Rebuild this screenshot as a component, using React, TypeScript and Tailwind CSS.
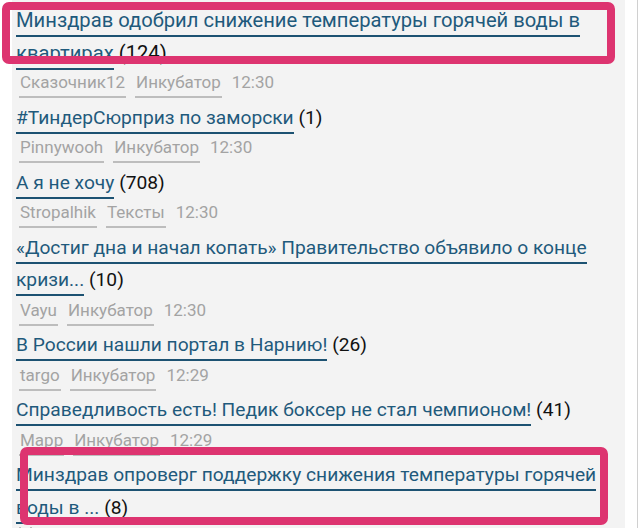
import React from 'react';

type Post = {
    title: string;
    count: number;
    author: string;
    section: string;
    time: string;
    big?: boolean;
};

const posts: Post[] = [
    { title: 'Минздрав одобрил снижение температуры горячей воды в квартирах', count: 124, author: 'Сказочник12', section: 'Инкубатор', time: '12:30', big: true },
    { title: '#ТиндерСюрприз по заморски', count: 1, author: 'Pinnywooh', section: 'Инкубатор', time: '12:30' },
    { title: 'А я не хочу', count: 708, author: 'Stropalhik', section: 'Тексты', time: '12:30' },
    { title: '«Достиг дна и начал копать» Правительство объявило о конце кризи...', count: 10, author: 'Vayu', section: 'Инкубатор', time: '12:30' },
    { title: 'В России нашли портал в Нарнию!', count: 26, author: 'targo', section: 'Инкубатор', time: '12:29' },
    { title: 'Справедливость есть! Педик боксер не стал чемпионом!', count: 41, author: 'Mapp', section: 'Инкубатор', time: '12:29' },
    { title: 'Минздрав опроверг поддержку снижения температуры горячей воды в ...', count: 8, author: '', section: '', time: '' },
];

const PostRow: React.FC<{ post: Post }> = ({ post }) => (
    <div>
        <div className={(post.big ? 'text-[20.2px]' : 'text-[19.2px]') + ' leading-[32.5px] text-[#111]'}>
            <a href="#" className="text-[#1f5a7c] border-b-2 border-[#1d5272] pb-[3px]">
                {post.title}
            </a>{' '}
            ({post.count})
        </div>
        <div className="flex items-start gap-[9px] pl-[3px] h-[32.5px] text-[17px] text-[#a3a3a3]">
            <a href="#" className="px-[1px] pb-[2px] border-b-2 border-[#bdbdbd] leading-[24px] mt-[1px]">{post.author}</a>
            <a href="#" className="px-[1px] pb-[2px] border-b-2 border-[#bdbdbd] leading-[24px] mt-[1px]">{post.section}</a>
            <span className="px-[1px] leading-[24px] mt-[1px]">{post.time}</span>
        </div>
    </div>
);

const App: React.FC = () => {
    return (
        <div
            className="relative flex w-[640px] h-[528px] overflow-hidden bg-white"
            style={{ fontFamily: 'Roboto, "Noto Sans", sans-serif' }}
        >
            <div className="w-[12px] shrink-0" />
            <div className="w-[613px] shrink-0 bg-[#f3f3f3] pt-[4px] pl-[4px] pr-[8px]">
                {posts.map((p, i) => (
                    <PostRow key={i} post={p} />
                ))}
            </div>
            <div className="w-[12px] shrink-0" />
            <div className="w-px shrink-0 bg-[#d0d0d0]" />

            {/* highlight frames */}
            <div className="absolute left-[2px] top-[2px] w-[613px] h-[62px] border-[8px] border-[#dd3470] rounded-[7px]" />
            <div className="absolute left-[20px] top-[447px] w-[588px] h-[78px] border-[8px] border-[#dd3470] rounded-[7px]" />
        </div>
    );
};

export default App;
